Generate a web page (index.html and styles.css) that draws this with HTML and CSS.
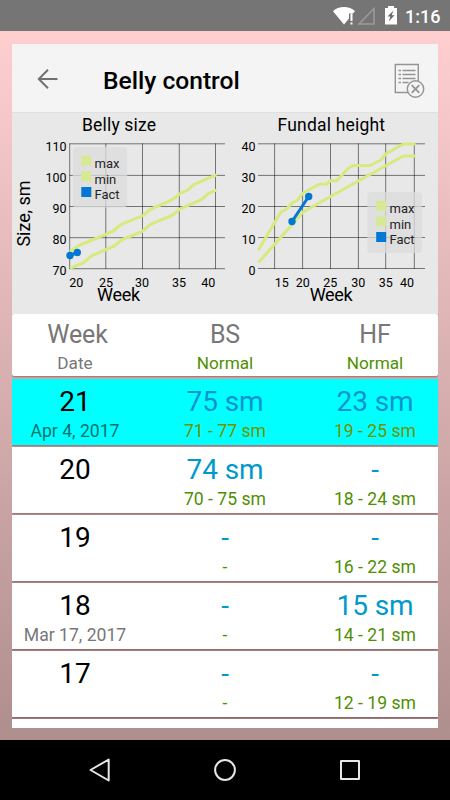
FILE: index.html
```html
<!DOCTYPE html>
<html lang="en">
<head>
    <meta charset="UTF-8">
    <meta name="viewport" content="width=device-width, initial-scale=1.0">
    <title>Belly control</title>
    <link rel="stylesheet" href="styles.css">
</head>
<body>

<div class="status-bar">
    <svg class="status-icons" width="70" height="31" viewBox="330 0 70 31">
        <path d="M333 11.2C338.500 5.600 349.500 5.600 355 11.200L352.800 13.500H349V18.500L344 24.500Z" fill="#fff"/>
        <path d="M350.500 13.500h2v7.500h-2zM350.500 22.500h2v2h-2z" fill="#fff"/>
        <path d="M374 8.500V24H359Z" fill="none" stroke="#9c9c9c" stroke-width="1.500"/>
        <path d="M385 8h3V6h6v2h3v16.500h-12z" fill="#fff"/>
        <path d="M393.500 10.500L387.500 16.500H390.500L388.700 21.500L394.500 15.300H391.600Z" fill="#666"/>
    </svg>
    <span class="clock">1:16</span>
</div>

<div class="screen">
    <div class="toolbar">
        <svg class="back" width="22" height="22" viewBox="0 0 22 22">
            <path d="M20.500 10H2.500M11 0.800L1.800 10L11 19.200" fill="none" stroke="#707070" stroke-width="2"/>
        </svg>
        <h1 class="title">Belly control</h1>
        <svg class="clear" width="32" height="36" viewBox="394 63 32 36">
            <g fill="none" stroke="#949494" stroke-width="1.400">
                <path d="M395.300 65.500h23v28h-23z"/>
                <path d="M398.500 71.500h2.500M402.500 71.500h13M398.500 75.500h2.500M402.500 75.500h13M398.500 79.500h2.500M402.500 79.500h13M398.500 83.500h2.500M402.500 83.500h6"/>
                <circle cx="415.500" cy="90" r="8.200" fill="#f4f4f4"/>
                <path d="M411.700 86.200l7.600 7.600M419.300 86.200l-7.600 7.600" stroke-width="1.800"/>
            </g>
        </svg>
    </div>

    <div class="charts">
        <svg class="chart" width="213" height="201" viewBox="12 113 213 201">
            <text class="chart-title" x="82" y="131.300" textLength="74">Belly size</text>
            <path class="grid-line" d="M69.500 143.800H225M69.500 175.400H225M69.500 206.500H225M69.500 237.700H225M69.500 268.700H225M69.700 143.500V269M105.800 143.500V269M142.500 143.500V269M179.300 143.500V269M215.500 143.500V269"/>
            <polyline class="norm" points="70,251.700 77.700,246 92.300,240 105.700,234.300 113.300,231 120.700,224.700 143.300,215.300 150,209.500 172.700,199.700 179.300,194 187.700,190 194,184.300 216.500,174.800"/>
            <polyline class="norm" points="70,268.300 84,262.300 92,255.700 114.300,246 121.300,240 142.300,231.300 150,224.700 172.700,215 179.300,209.300 201.700,199.300 208.300,193.700 216.500,190"/>
            <polyline class="fact" points="70,255.500 77.300,252.500"/>
            <circle class="dot" cx="70" cy="255.500" r="3.700"/>
            <circle class="dot" cx="77.300" cy="252.500" r="3.700"/>
            <g class="ticks end">
                <text x="66.500" y="150.500">110</text>
                <text x="66.500" y="182">100</text>
                <text x="66.500" y="213">90</text>
                <text x="66.500" y="244">80</text>
                <text x="66.500" y="275">70</text>
            </g>
            <g class="ticks middle">
                <text x="76.300" y="287">20</text>
                <text x="106" y="287">25</text>
                <text x="142" y="287">30</text>
                <text x="179" y="287">35</text>
                <text x="208.300" y="287">40</text>
            </g>
            <text class="axis" x="97" y="301" textLength="43">Week</text>
            <text class="axis" transform="translate(30 246.500) rotate(-90)" textLength="66">Size, sm</text>
            <rect class="legend-box" x="72.700" y="147" width="54.500" height="60.500" rx="4"/>
            <rect x="81.300" y="155.500" width="10" height="10" fill="#d7e994"/>
            <rect x="81.300" y="171.200" width="10" height="10" fill="#d7e994"/>
            <rect x="81.300" y="187" width="10" height="10" fill="#0277d4"/>
            <g class="legend">
                <text x="94.500" y="168">max</text>
                <text x="94.500" y="183.700">min</text>
                <text x="94.500" y="199.300">Fact</text>
            </g>
        </svg>
        <svg class="chart" width="213" height="201" viewBox="225 113 213 201">
            <text class="chart-title" x="277.500" y="131.300" textLength="107.500">Fundal height</text>
            <path class="grid-line" d="M258 143.800H425M258 175.400H425M258 206.500H425M258 237.500H425M258 268.500H425M274.600 143.500V269M302.600 143.500V269M330.500 143.500V269M358.400 143.500V269M385.700 143.500V269M414.300 143.500V269"/>
            <polyline class="norm" points="258.500,250 280.700,212.300 286.700,209 291.700,203.300 297.700,200 302.700,193.300 319.300,184.300 326.700,184 330.700,180.700 336.700,180.700 347.700,168.700 352.700,165.500 370.300,165.500 381,160 386,153.700 403.300,144 415.500,144"/>
            <polyline class="norm" points="258.500,262.500 291.700,225 302.700,212.300 335,194 358.300,181 403.300,156 415.500,156"/>
            <polyline class="fact" points="292,221.500 308.700,196.500"/>
            <circle class="dot" cx="292" cy="221.500" r="3.700"/>
            <circle class="dot" cx="308.700" cy="196.500" r="3.700"/>
            <g class="ticks end">
                <text x="255.500" y="150.500">40</text>
                <text x="255.500" y="182">30</text>
                <text x="255.500" y="213">20</text>
                <text x="255.500" y="244">10</text>
                <text x="255.500" y="275">0</text>
            </g>
            <g class="ticks middle">
                <text x="281.700" y="287">15</text>
                <text x="302.700" y="287">20</text>
                <text x="330.300" y="287">25</text>
                <text x="358.300" y="287">30</text>
                <text x="385.800" y="287">35</text>
                <text x="407" y="287">40</text>
            </g>
            <text class="axis" x="309.700" y="301" textLength="43">Week</text>
            <rect class="legend-box" x="367.300" y="192" width="54.700" height="61" rx="4"/>
            <rect x="376.200" y="200.800" width="10" height="10" fill="#d7e994"/>
            <rect x="376.200" y="216.300" width="10" height="10" fill="#d7e994"/>
            <rect x="376.200" y="232" width="10" height="10" fill="#0277d4"/>
            <g class="legend">
                <text x="389.500" y="213">max</text>
                <text x="389.500" y="228.700">min</text>
                <text x="389.500" y="244.300">Fact</text>
            </g>
        </svg>
    </div>

    <div class="list">
        <div class="row head">
            <div class="cell"><span class="big week">Week</span><span class="small">Date</span></div>
            <div class="cell"><span class="big">BS</span><span class="small norm-text">Normal</span></div>
            <div class="cell"><span class="big">HF</span><span class="small norm-text">Normal</span></div>
        </div>
        <div class="row current">
            <div class="cell"><span class="big">21</span><span class="small">Apr 4, 2017</span></div>
            <div class="cell"><span class="big value">75 sm</span><span class="small norm-text">71 - 77 sm</span></div>
            <div class="cell"><span class="big value">23 sm</span><span class="small norm-text">19 - 25 sm</span></div>
        </div>
        <div class="row">
            <div class="cell"><span class="big">20</span></div>
            <div class="cell"><span class="big value">74 sm</span><span class="small norm-text">70 - 75 sm</span></div>
            <div class="cell"><span class="big value">-</span><span class="small norm-text">18 - 24 sm</span></div>
        </div>
        <div class="row">
            <div class="cell"><span class="big">19</span></div>
            <div class="cell"><span class="big value">-</span><span class="small norm-text">-</span></div>
            <div class="cell"><span class="big value">-</span><span class="small norm-text">16 - 22 sm</span></div>
        </div>
        <div class="row">
            <div class="cell"><span class="big">18</span><span class="small">Mar 17, 2017</span></div>
            <div class="cell"><span class="big value">-</span><span class="small norm-text">-</span></div>
            <div class="cell"><span class="big value">15 sm</span><span class="small norm-text">14 - 21 sm</span></div>
        </div>
        <div class="row">
            <div class="cell"><span class="big">17</span></div>
            <div class="cell"><span class="big value">-</span><span class="small norm-text">-</span></div>
            <div class="cell"><span class="big value">-</span><span class="small norm-text">12 - 19 sm</span></div>
        </div>
        <div class="row"></div>
    </div>
</div>

<div class="nav-bar">
    <svg width="24" height="24" viewBox="0 0 24 24"><path d="M20.700 1.500V22.500L2.500 12Z"/></svg>
    <svg width="24" height="24" viewBox="0 0 24 24"><circle cx="12" cy="12" r="9.900"/></svg>
    <svg width="24" height="24" viewBox="0 0 24 24"><path d="M3 3h18v18H3z"/></svg>
</div>

</body>
</html>
```
FILE: styles.css
```css
* {
    box-sizing: border-box;
}

body {
    margin: 0;
    width: 450px;
    height: 800px;
    display: flex;
    flex-direction: column;
    overflow: hidden;
    font-family: Roboto, "Liberation Sans", sans-serif;
    background-color: #000;
}

svg {
    display: block;
}

/* system bars */
.status-bar {
    height: 31px;
    flex: none;
    display: flex;
    justify-content: flex-end;
    align-items: center;
    padding-right: 11px;
    background-color: #757575;
}

.clock {
    width: 34px;
    margin-left: 5px;
    padding-top: 2px;
    font-size: 18px;
    font-weight: 500;
    line-height: 21px;
    color: #fff;
    white-space: nowrap;
}

.nav-bar {
    height: 60px;
    flex: none;
    display: flex;
    justify-content: center;
    align-items: center;
    gap: 101px;
    background-color: #000;
}

.nav-bar svg {
    fill: none;
    stroke: #e6e6e6;
    stroke-width: 2;
    stroke-linejoin: round;
}

/* app */
.screen {
    height: 709px;
    flex: none;
    padding: 13px 12px 12px;
    background: linear-gradient(#ffcfd0, #af8e8e);
}

.toolbar {
    height: 69px;
    display: flex;
    align-items: center;
    padding: 3px 12px 0 25px;
    background-color: #f4f4f4;
    border-bottom: 1px solid #e0e0e0;
}

.title {
    flex: 1;
    margin: 2px 0 0 44px;
    font-size: 24.6px;
    font-weight: 500;
    line-height: 30px;
    color: #000;
}

.charts {
    height: 201px;
    display: flex;
    background-color: #e8e8e8;
}

.chart text {
    fill: #000;
}

.chart-title {
    font-size: 17.5px;
}

.axis {
    font-size: 18px;
}

.ticks {
    font-size: 12.5px;
}

.end {
    text-anchor: end;
}

.middle {
    text-anchor: middle;
}

.legend {
    font-size: 13px;
    opacity: 0.85;
}

.grid-line {
    stroke: #000;
    stroke-opacity: 0.5;
    stroke-width: 1;
}

.norm {
    fill: none;
    stroke: #d7ea7e;
    stroke-width: 3;
    stroke-linejoin: round;
}

.fact {
    fill: none;
    stroke: #0277d4;
    stroke-width: 3;
}

.dot {
    fill: #0277d4;
}

.legend-box {
    fill: #dcdcdc;
    fill-opacity: 0.75;
}

/* week list */
.list {
    height: 414px;
    display: flex;
    flex-direction: column;
    gap: 2px;
    overflow: hidden;
}

.row {
    height: 66px;
    flex: none;
    display: grid;
    grid-template-columns: 126px 1fr 126px;
    padding-top: 6px;
    background-color: #fff;
    box-shadow: 0 1px 2px rgba(60, 0, 0, 0.4);
}

.cell {
    display: flex;
    flex-direction: column;
    align-items: center;
    gap: 3px;
    white-space: nowrap;
}

.big {
    font-size: 28px;
    line-height: 33px;
    letter-spacing: -0.1px;
    color: #000;
}

.small {
    font-size: 17.6px;
    line-height: 20px;
    color: #777;
}

.value {
    color: #0099cc;
}

.norm-text {
    color: #4f9000;
}

.head {
    height: 62px;
    margin-bottom: 1px;
    border-radius: 2px;
}

.head .big {
    font-size: 25px;
    line-height: 30px;
    color: #777;
}

.head .week {
    padding-left: 5px;
}

.head .small {
    font-size: 17.2px;
}

.current {
    background-color: #00ffff;
}

.current .small {
    color: #00736f;
}

.current .value {
    color: #0d93cc;
}

.current .norm-text {
    color: #6f9500;
}
```
